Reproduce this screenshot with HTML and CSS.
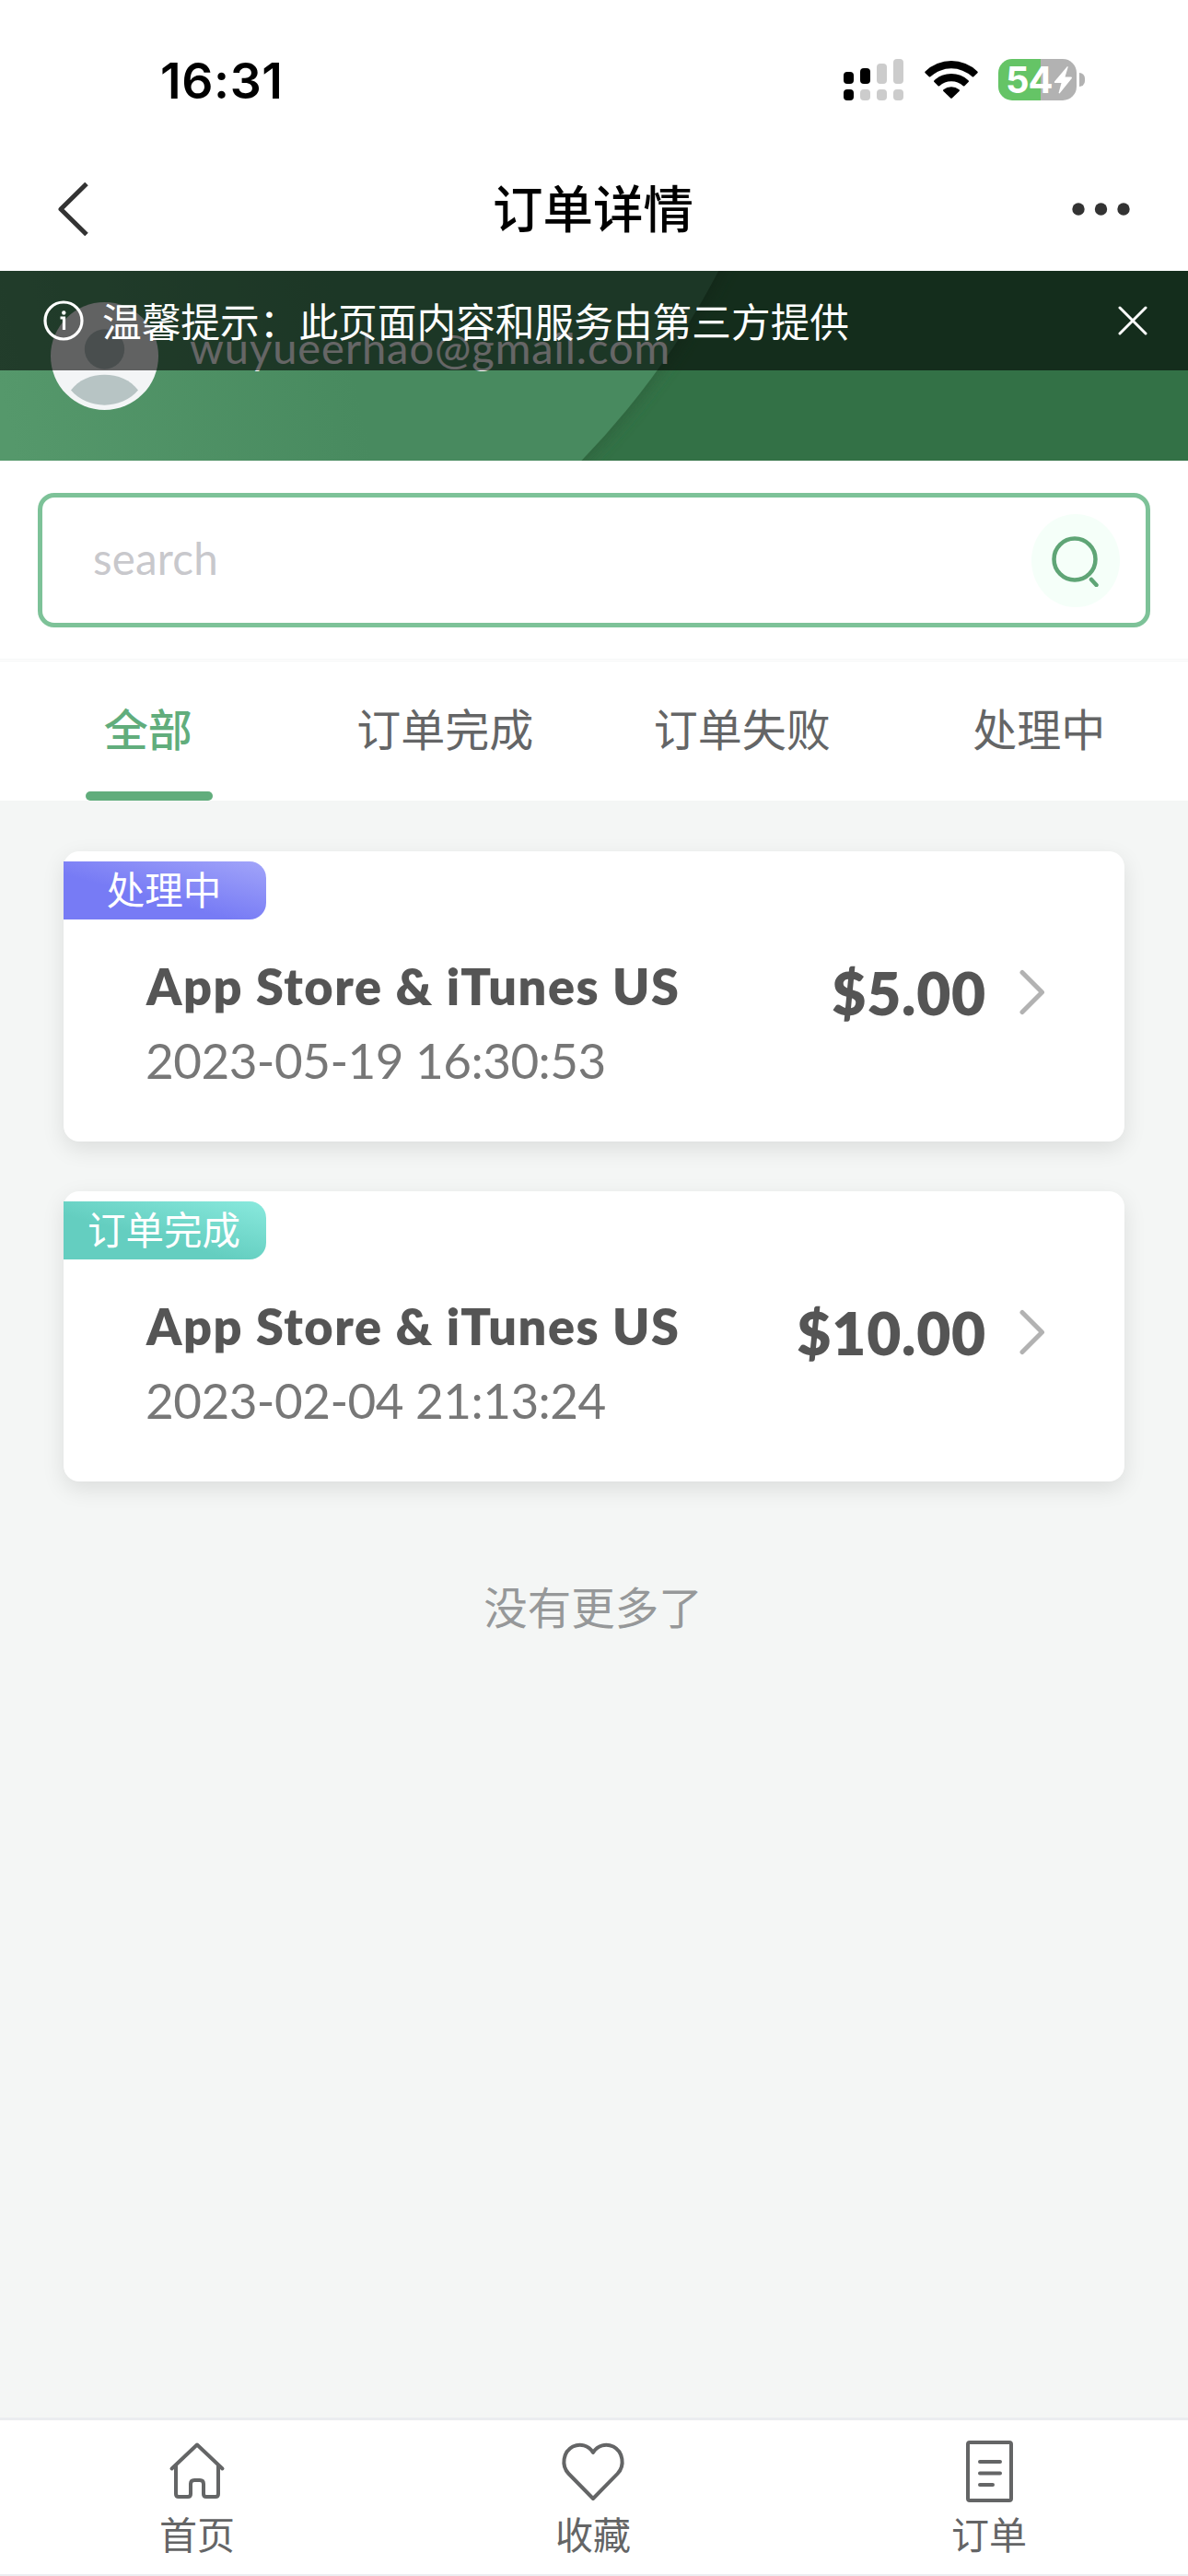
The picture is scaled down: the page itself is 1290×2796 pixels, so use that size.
FILE: index.html
```html
<!DOCTYPE html>
<html lang="zh-CN">
<head>
<meta charset="utf-8">
<title>订单详情</title>
<link rel="stylesheet" href="styles.css">
</head>
<body>
<div class="screen">
  <div class="status">
    <span class="time">16:31</span>
    <svg class="signal" width="65" height="45" viewBox="0 0 65 45">
      <g fill="#000"><rect x="0" y="14" width="11" height="13" rx="4"/><rect x="18" y="10" width="11" height="17" rx="4"/><rect x="0" y="33" width="11" height="12" rx="4"/></g>
      <g fill="#ccc"><rect x="36" y="5" width="11" height="22" rx="4"/><rect x="54" y="0" width="11" height="27" rx="4"/><rect x="18" y="33" width="11" height="12" rx="4"/><rect x="36" y="33" width="11" height="12" rx="4"/><rect x="54" y="33" width="11" height="12" rx="4"/></g>
    </svg>
    <svg class="wifi" width="58" height="42" viewBox="0 0 58 42">
      <path d="M.6 14.200Q-.2 13.300.7 12.400A41 41 0 0 1 57.300 12.400Q58.200 13.300 57.400 14.200L53.200 18.300Q52.500 18.900 51.700 18.200A33.500 33.500 0 0 0 6.300 18.200Q5.500 18.900 4.800 18.300Z"/>
      <path d="M10.400 24Q9.600 23.200 10.500 22.300A27 27 0 0 1 47.500 22.300Q48.400 23.200 47.600 24L43.400 28.200Q42.600 28.900 41.800 28.200A19 19 0 0 0 16.200 28.200Q15.400 28.900 14.600 28.200Z"/>
      <path d="M20.400 33.900Q19.600 33 20.500 32.200A13.500 13.500 0 0 1 37.500 32.200Q38.400 33 37.600 33.900L29.800 41.500Q29 42.200 28.200 41.500Z"/>
    </svg>
    <div class="battery">
      <div class="battery-body"><span>54</span><svg width="21" height="30" viewBox="0 0 21 30"><path d="M15 0 1 16.500Q.2 18 1.800 18H8.500L5.500 29 6.500 29.500 19.800 13Q20.600 11.500 19 11.500H12.500L15.800.5Z" fill="#fff"/></svg></div>
      <div class="battery-cap"></div>
    </div>
  </div>
  <div class="nav">
    <svg class="back" width="36" height="58" viewBox="0 0 36 58"><path d="M33 1.500 5 29 33 56.500" fill="none" stroke="#333" stroke-width="5" stroke-linejoin="round"/></svg>
    <h1>订单详情</h1>
    <svg class="more" width="64" height="14" viewBox="0 0 64 14" fill="#333"><circle cx="7" cy="7" r="6.700"/><circle cx="31.500" cy="7" r="6.700"/><circle cx="56" cy="7" r="6.700"/></svg>
  </div>
  <header class="profile">
    <svg class="profile-bg" width="1290" height="206" viewBox="0 294 1290 206">
      <defs>
        <linearGradient id="leaf" gradientUnits="userSpaceOnUse" x1="0" y1="420" x2="370" y2="340"><stop offset="0" stop-color="#55986b"/><stop offset="1" stop-color="#488a5f"/></linearGradient>
        <filter id="soft" x="-10%" y="-10%" width="120%" height="120%"><feGaussianBlur stdDeviation="8"/></filter>
      </defs>
      <rect y="294" width="1290" height="206" fill="#337146"/>
      <circle cx="4" cy="-112" r="880" fill="#2d643e" filter="url(#soft)"/>
      <circle cx="0" cy="-113" r="880" fill="url(#leaf)"/>
    </svg>
    <svg class="avatar" width="117" height="117" viewBox="0 0 117 117"><circle cx="58.500" cy="58.500" r="58.500" fill="#f3f5f6"/><circle cx="58.500" cy="51" r="21.700" fill="#b7c4c4"/><path d="M22 95.500C38 73 79 73 95 95.500C77 117 40 117 22 95.500Z" fill="#b7c4c4"/></svg>
    <span class="email">wuyueerhao@gmail.com</span>
    <div class="notice">
      <svg class="info" width="44" height="44" viewBox="0 0 44 44" fill="none" stroke="#fff" stroke-width="3.200"><circle cx="22" cy="22" r="20"/><path d="M18.500 19H22.500V32"/><circle cx="22.300" cy="13.500" r="2.200" fill="#fff" stroke="none"/></svg>
      <p>温馨提示：此页面内容和服务由第三方提供</p>
      <svg class="close" width="32" height="32" viewBox="0 0 32 32"><path d="M2 2 30 30M30 2 2 30" stroke="#fff" stroke-width="3" stroke-linecap="round"/></svg>
    </div>
  </header>
  <div class="search-wrap">
    <div class="search"><span>search</span>
      <div class="search-btn"><svg width="54" height="58" viewBox="0 0 54 58" fill="none" stroke="#5fa576" stroke-width="4.500" stroke-linecap="round"><circle cx="26" cy="28" r="22.500"/><path d="M44 50 49.500 56"/></svg></div>
    </div>
  </div>
  <div class="tabs"><div class="tab active">全部</div><div class="tab">订单完成</div><div class="tab">订单失败</div><div class="tab">处理中</div></div>
  <main class="orders">
    <article class="card">
      <div class="tag pending">处理中</div>
      <div class="row">
        <div class="info-col"><h2>App Store &amp; iTunes US</h2><time>2023-05-19 16:30:53</time></div>
        <b class="price">$5.00</b>
        <svg class="chev" width="28" height="50" viewBox="0 0 28 50"><path d="M3 3.500 24.500 25 3 46.500" fill="none" stroke="#b2b2b2" stroke-width="5" stroke-linecap="round" stroke-linejoin="round"/></svg>
      </div>
    </article>
    <article class="card">
      <div class="tag done">订单完成</div>
      <div class="row">
        <div class="info-col"><h2>App Store &amp; iTunes US</h2><time>2023-02-04 21:13:24</time></div>
        <b class="price">$10.00</b>
        <svg class="chev" width="28" height="50" viewBox="0 0 28 50"><path d="M3 3.500 24.500 25 3 46.500" fill="none" stroke="#b2b2b2" stroke-width="5" stroke-linecap="round" stroke-linejoin="round"/></svg>
      </div>
    </article>
    <p class="end">没有更多了</p>
  </main>
  <nav class="tabbar">
    <a><svg width="72" height="72" viewBox="0 0 72 72"><path d="M8.500 33.500 36 7.500 63.500 33.500M13 30V61Q13 64 16 64H26Q29 64 29 61V50Q29 46 33 46H39Q43 46 43 50V61Q43 64 46 64H56Q59 64 59 61V30"/></svg>首页</a>
    <a><svg width="72" height="72" viewBox="0 0 72 72"><path d="M36 66 9.500 39C1 30 3.500 15 14 9.500C22 6 31 8 36 16C41 8 50 6 58 9.500C68.500 15 71 30 62.500 39Z"/></svg>收藏</a>
    <a><svg width="72" height="72" viewBox="0 0 72 72"><rect x="13" y="5" width="47" height="63" rx="2"/><path d="M26 26H48M26 38.500H48M26 51H40"/></svg>订单</a>
  </nav>
</div>
</body>
</html>
```
FILE: styles.css
```css
* { box-sizing: border-box; margin: 0; padding: 0; }
body { width: 1290px; background: #fff; font-family: Lato, "Noto Sans CJK SC", sans-serif; color: #666; }
svg { display: block; flex: none; }
.screen { width: 1290px; height: 2796px; display: flex; flex-direction: column; overflow: hidden; }

.status { height: 162px; display: flex; align-items: flex-start; padding: 64px 112px 0 174px; }
.time { font: 600 53.500px/48px Inter, sans-serif; color: #000; letter-spacing: .6px; width: 742px; }
.wifi { margin: 1px 22px 0 23px; }
.battery { display: flex; align-items: center; gap: 3px; }
.battery-body { width: 85px; height: 45px; border-radius: 15px; background: linear-gradient(90deg, #65c466 46px, #b2b2b2 46px); display: flex; align-items: center; padding-left: 8px; font: 700 40px/45px Inter, sans-serif; color: #fff; letter-spacing: -1px; }
.battery-body span { width: 52px; }
.battery-cap { width: 6px; height: 15px; border-radius: 0 6px 6px 0; background: #b2b2b2; }

.nav { height: 132px; display: flex; align-items: center; justify-content: space-between; padding: 0 62px 2px 61px; }
.nav h1 { font: 500 54.500px/80px "Noto Sans CJK SC", sans-serif; color: #000; margin: -6px 0 0 27px; }

.profile { height: 206px; position: relative; display: flex; padding: 34px 55px; }
.profile-bg { position: absolute; left: 0; top: 0; }
.avatar { position: relative; }
.email { position: relative; margin-left: 34px; font-size: 47px; line-height: 60px; margin-top: 19px; font-weight: 400; color: #fff; letter-spacing: .95px; }
.notice { position: absolute; left: 0; top: 0; width: 100%; height: 108px; background: rgba(0,0,0,.6); display: flex; align-items: center; padding: 0 44px 0 47px; color: #fff; }
.notice p { font: 400 42.700px/60px "Noto Sans CJK SC", sans-serif; margin: -3px 0 0 20px; flex: 1; }

.search-wrap { height: 218px; padding: 35px 41px; border-bottom: 3px double #f5f6f6; }
.search { height: 146px; border: 5px solid #7dc298; border-radius: 18px; display: flex; align-items: center; justify-content: space-between; padding: 0 28px 0 55px; font-size: 47.500px; color: #c8c8cc; letter-spacing: .2px; }
.search span { margin-top: -6px; }
.search-btn { width: 96px; height: 101px; border-radius: 50%; background: #f5fff9; display: flex; align-items: center; justify-content: center; }

.tabs { height: 151px; display: grid; grid-template-columns: repeat(4, 1fr); }
.tab { font-size: 48px; line-height: 142px; text-align: center; color: #646566; font-family: "Noto Sans CJK SC", sans-serif; display: flex; flex-direction: column; align-items: center; padding-right: 1px; }
.tab.active { color: #61ad7c; font-weight: 500; }
.tab.active::after { content: ""; width: 138px; height: 10px; border-radius: 5px; background: #61ad7c; margin: -1px 0 0 2px; }

.orders { flex: 1; background: #f4f6f5; padding: 55px 69px 0; display: flex; flex-direction: column; gap: 54px; }
.card { height: 315px; background: #fff; border-radius: 17px; box-shadow: 0 8px 24px rgba(0,0,0,.1); padding-top: 11px; }
.tag { width: 220px; height: 63px; border-radius: 0 18px 18px 0; color: #fff; font: 400 41.500px/58px "Noto Sans CJK SC", sans-serif; text-align: center; padding-right: 2px; }
.pending { background: linear-gradient(15deg, #777bf5 40%, #9ea1f9 95%); }
.done { background: linear-gradient(15deg, #64cec0 40%, #86e7db 95%); }
.row { display: flex; align-items: flex-start; padding: 33px 86px 0 90px; }
.info-col { flex: 1; display: flex; flex-direction: column; }
.row h2 { font-size: 54px; line-height: 80px; font-weight: 800; color: #555; letter-spacing: 1.530px; white-space: nowrap; }
.row time { font-size: 53px; line-height: 80px; font-weight: 400; color: #777; letter-spacing: -.53px; margin-left: -1px; white-space: nowrap; }
.price { font-size: 64px; line-height: 80px; font-weight: 800; color: #555; margin-top: 7px; letter-spacing: .8px; }
.chev { margin: 21px 0 0 36px; }
.end { text-align: center; font: 400 47.500px/70px "Noto Sans CJK SC", sans-serif; color: #969899; margin-top: 46px; padding-right: 2px; }

.tabbar { height: 172px; border-top: 3px solid #ebedf0; border-bottom: 2px solid #ebedf0; display: grid; grid-template-columns: repeat(3, 1fr); background: #fff; }
.tabbar a { display: flex; flex-direction: column; align-items: center; padding: 19px 2px 0 0; font: 400 41px/62px "Noto Sans CJK SC", sans-serif; color: #646566; }
.tabbar svg { fill: none; stroke: #646566; stroke-width: 4; stroke-linecap: round; stroke-linejoin: round; }
```
